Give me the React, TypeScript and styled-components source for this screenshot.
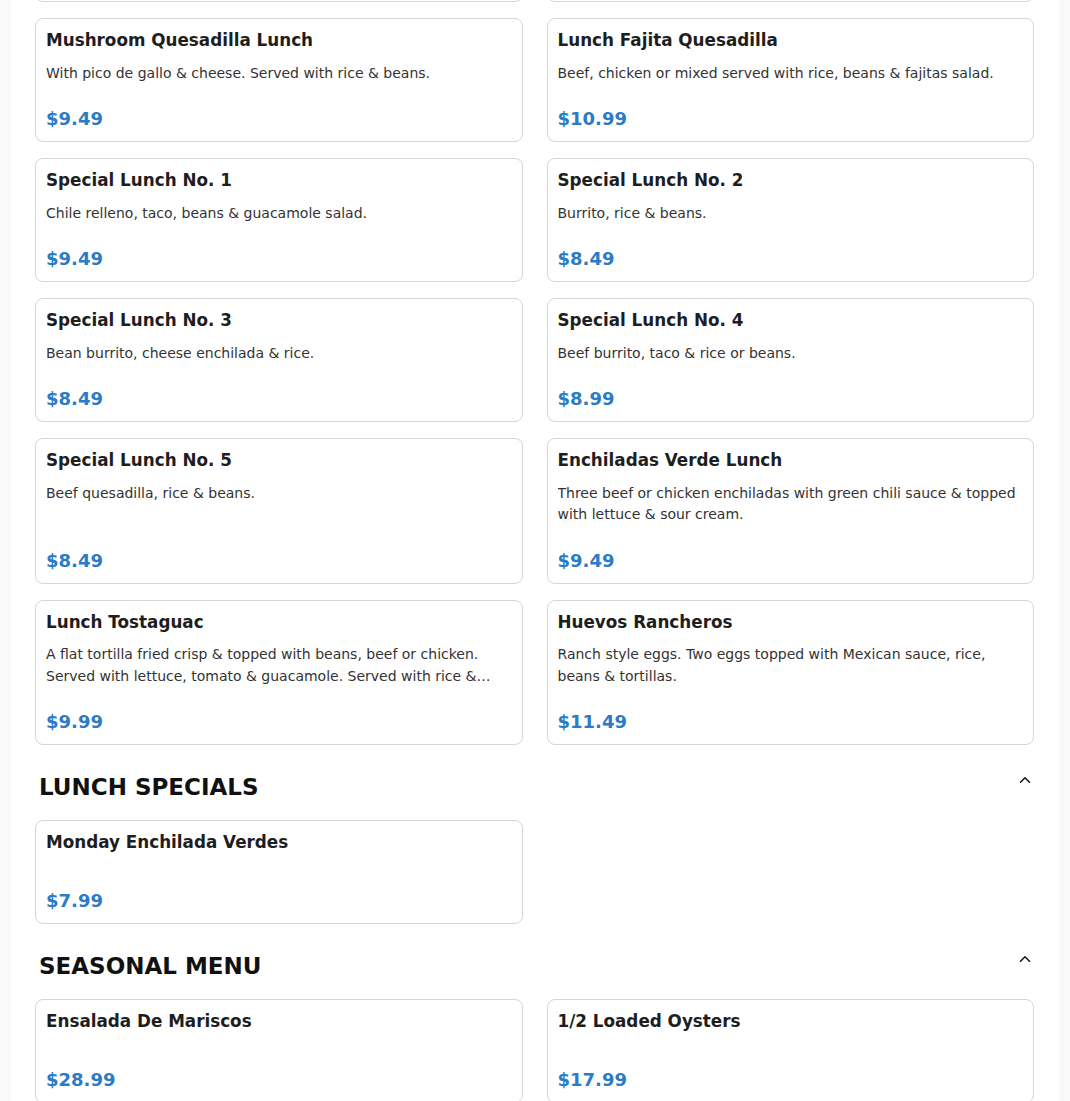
import React, { useLayoutEffect, useRef } from "react";
import styled, { createGlobalStyle } from "styled-components";
import { ChevronUp } from "lucide-react";

const GlobalStyle = createGlobalStyle`
  html, body {
    margin: 0;
    padding: 0;
    height: 100%;
    background: #f9f9f9;
    font-family: "DejaVu Sans", "Noto Sans", sans-serif;
  }
  #root { height: 100%; }
  * { box-sizing: border-box; }
`;

const Viewport = styled.div`
  height: 100vh;
  overflow-y: auto;
  scrollbar-width: none;
  &::-webkit-scrollbar { display: none; }
`;

const Panel = styled.main`
  margin: 0 11px;
  background: #ffffff;
  padding: 0 25px 24px 24px;
  min-height: 100%;
`;

const Section = styled.section`
  display: flex;
  flex-direction: column;
`;

const SectionHeader = styled.div`
  display: flex;
  justify-content: space-between;
  align-items: flex-start;
  padding: 0 0 0 4px;
  margin: 26px 0 20px;
  color: #111;
`;

const SectionTitle = styled.h2`
  margin: 3px 0 0;
  font-size: 23px;
  font-weight: 700;
  line-height: normal;
  color: #111;
`;

const Toggle = styled.button`
  display: flex;
  border: none;
  background: none;
  padding: 0;
  color: #111;
  cursor: pointer;
`;

const Grid = styled.div`
  display: grid;
  grid-template-columns: 1fr 1fr;
  column-gap: 24px;
  row-gap: 16px;
`;

const Card = styled.article`
  display: flex;
  flex-direction: column;
  border: 1px solid #d6d6d6;
  border-radius: 8px;
  padding: 11px 10px 12px;
  background: #fff;
`;

const ItemName = styled.h3`
  margin: 0;
  font-size: 16.8px;
  font-weight: 700;
  line-height: 20px;
  color: #1e1e1e;
`;

const ItemDesc = styled.p`
  flex: 1;
  margin: 12.5px 0 0;
  min-height: 1.5px;
  font-size: 14px;
  line-height: 21.5px;
  color: #333;
  display: -webkit-box;
  -webkit-line-clamp: 2;
  -webkit-box-orient: vertical;
  overflow: hidden;
`;

const ItemPrice = styled.div`
  margin-top: 24px;
  font-size: 18px;
  font-weight: 700;
  line-height: 21px;
  color: #2b7bc6;
`;

type Item = { name: string; desc?: string; price: string };

const lunch: Item[] = [
  { name: "Lunch Chimichanga", desc: "Beef or chicken chimichanga served with rice & beans.", price: "$9.49" },
  { name: "Lunch Taco Salad", desc: "Crispy flour tortilla shell with beef or chicken.", price: "$9.49" },
  { name: "Mushroom Quesadilla Lunch", desc: "With pico de gallo & cheese. Served with rice & beans.", price: "$9.49" },
  { name: "Lunch Fajita Quesadilla", desc: "Beef, chicken or mixed served with rice, beans & fajitas salad.", price: "$10.99" },
  { name: "Special Lunch No. 1", desc: "Chile relleno, taco, beans & guacamole salad.", price: "$9.49" },
  { name: "Special Lunch No. 2", desc: "Burrito, rice & beans.", price: "$8.49" },
  { name: "Special Lunch No. 3", desc: "Bean burrito, cheese enchilada & rice.", price: "$8.49" },
  { name: "Special Lunch No. 4", desc: "Beef burrito, taco & rice or beans.", price: "$8.99" },
  { name: "Special Lunch No. 5", desc: "Beef quesadilla, rice & beans.", price: "$8.49" },
  {
    name: "Enchiladas Verde Lunch",
    desc: "Three beef or chicken enchiladas with green chili sauce & topped with lettuce & sour cream.",
    price: "$9.49",
  },
  {
    name: "Lunch Tostaguac",
    desc: "A flat tortilla fried crisp & topped with beans, beef or chicken. Served with lettuce, tomato & guacamole. Served with rice & beans.",
    price: "$9.99",
  },
  { name: "Huevos Rancheros", desc: "Ranch style eggs. Two eggs topped with Mexican sauce, rice, beans & tortillas.", price: "$11.49" },
];

const specials: Item[] = [{ name: "Monday Enchilada Verdes", price: "$7.99" }];

const seasonal: Item[] = [
  { name: "Ensalada De Mariscos", price: "$28.99" },
  { name: "1/2 Loaded Oysters", price: "$17.99" },
];

function MenuCard({ item, innerRef }: { item: Item; innerRef?: React.Ref<HTMLElement> }) {
  return (
    <Card ref={innerRef as any}>
      <ItemName>{item.name}</ItemName>
      <ItemDesc>{item.desc ?? ""}</ItemDesc>
      <ItemPrice>{item.price}</ItemPrice>
    </Card>
  );
}

function MenuSection({
  title,
  items,
  anchorIndex,
  anchorRef,
}: {
  title: string;
  items: Item[];
  anchorIndex?: number;
  anchorRef?: React.Ref<HTMLElement>;
}) {
  return (
    <Section>
      <SectionHeader>
        <SectionTitle>{title}</SectionTitle>
        <Toggle aria-label="Collapse section">
          <ChevronUp size={18} strokeWidth={2} />
        </Toggle>
      </SectionHeader>
      <Grid>
        {items.map((it, i) => (
          <MenuCard key={it.name} item={it} innerRef={i === anchorIndex ? anchorRef : undefined} />
        ))}
      </Grid>
    </Section>
  );
}

export default function App() {
  const viewRef = useRef<HTMLDivElement>(null);
  const anchorRef = useRef<HTMLElement>(null);

  useLayoutEffect(() => {
    const view = viewRef.current;
    const anchor = anchorRef.current;
    if (!view || !anchor) return;
    const delta = anchor.getBoundingClientRect().top - view.getBoundingClientRect().top - 18;
    view.scrollTop += delta;
  }, []);

  return (
    <>
      <GlobalStyle />
      <Viewport ref={viewRef}>
        <Panel>
          <MenuSection title="LUNCH" items={lunch} anchorIndex={2} anchorRef={anchorRef} />
          <MenuSection title="LUNCH SPECIALS" items={specials} />
          <MenuSection title="SEASONAL MENU" items={seasonal} />
        </Panel>
      </Viewport>
    </>
  );
}
